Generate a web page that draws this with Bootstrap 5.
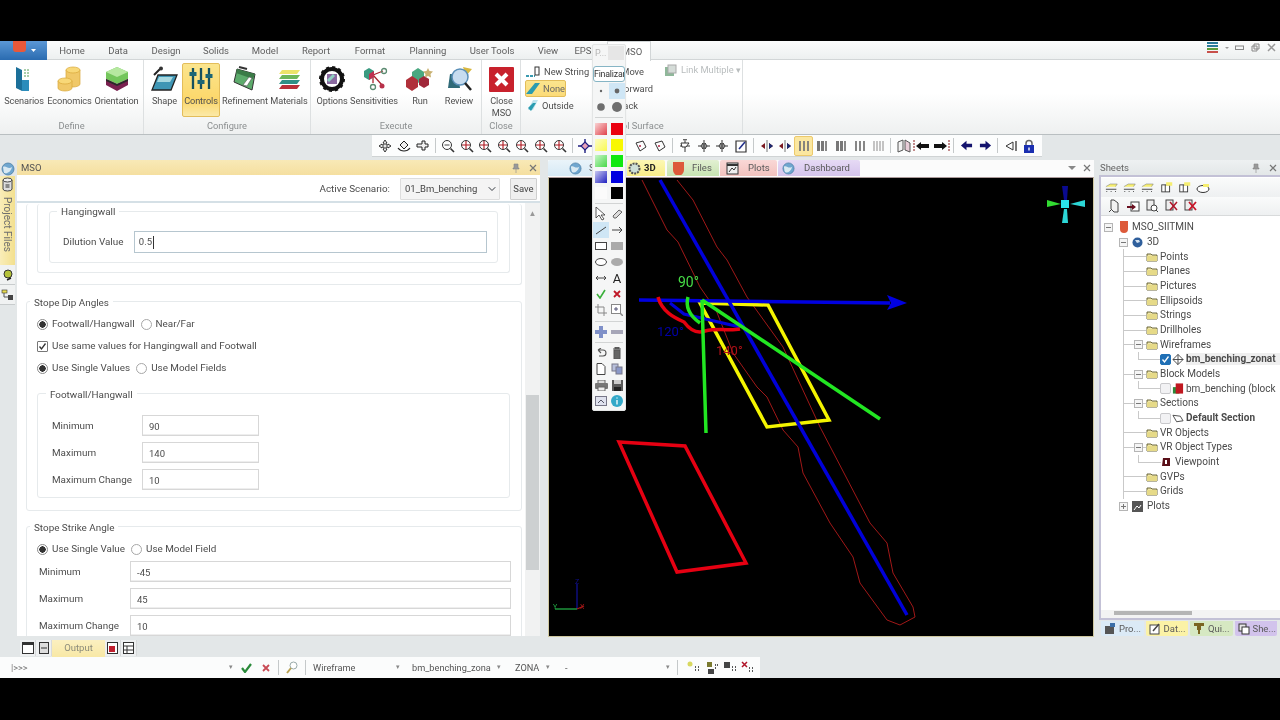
<!DOCTYPE html>
<html lang="en">
<head>
    <meta charset="UTF-8">
    <meta name="viewport" content="width=device-width, initial-scale=1.0">
    <title>MSO</title>
    <link href="https://cdn.jsdelivr.net/npm/bootstrap@5.3.0/dist/css/bootstrap.min.css" rel="stylesheet">
    <style>
        html, body { margin: 0; height: 720px; overflow: hidden; background: #000; }
        body { font-family: Roboto, "Liberation Sans", sans-serif; font-size: 10px; color: #4c4c4c; line-height: 1.2; }
        svg { display: block; flex: none; }
        .sprite { position: absolute; width: 0; height: 0; }
        #app { position: relative; margin-top: 41px; height: 637px; width: 1280px; background: #e3e7e8; overflow: hidden; filter: blur(.3px); }

        /* ribbon tabs */
        .rtabs { height: 19px; background: linear-gradient(#fbfcfc, #edf0f0); border-bottom: 1px solid #d2d6d7; }
        .appbtn { width: 47px; height: 19px; background: linear-gradient(#5b98d6, #2a6bb0); }
        .rtabs .nav-link { padding: 0; color: #5e5e5e; font-size: 9.5px; line-height: 19px; text-align: center; }
        .tw-a { width: 50px; } .tw-b { width: 42px; } .tw-c { width: 54px; } .tw-d { width: 46px; }
        .tw-e { width: 52px; } .tw-f { width: 50px; } .tw-g { width: 58px; } .tw-h { width: 58px; } .tw-i { width: 70px; } .tw-j { width: 42px; } .tw-k { width: 28px; }
        .rtabs .nav-link.active { width: 44px; height: 20px; background: #fff; border: 1px solid #d2d6d7; border-bottom: 0; margin-left: 10px; padding-left: 6px; }
        .winbtns { gap: 7px; padding-right: 4px; color: #888; }
        .tight { margin-right: -3px; }

        /* ribbon */
        .ribbon { height: 75px; background: linear-gradient(#fff 45%, #eef0f0); border-bottom: 1px solid #b9bfc1; }
        .rgroup { height: 74px; border-right: 1px solid #dde0e1; position: relative; flex: none; }
        .g-define { width: 144px; padding-left: 1px; }
        .g-config { width: 167px; padding-left: 3px; }
        .g-exec { width: 171px; padding-left: 2px; }
        .g-close { width: 39px; }
        .g-surf { width: 222px; }
        .glabel { position: absolute; left: 0; right: 0; bottom: 3px; text-align: center; color: #8b8f90; font-size: 9.3px; }
        .rbtn { margin-top: 3px; height: 54px; display: flex; flex-direction: column; align-items: center; padding-top: 3px; text-align: center; font-size: 9.2px; letter-spacing: -.1px; color: #505050; flex: none; line-height: 12px; white-space: nowrap; }
        .rbtn svg { margin-bottom: 3px; }
        .rbtn.on { background: linear-gradient(#fbe58e, #fcd76a 70%, #fbe9a8); border: 1px solid #e3bd5a; border-radius: 2px; padding-top: 2px; }
        .w35 { width: 35px; } .w38 { width: 38px; } .w39 { width: 39px; } .w46 { width: 46px; } .w45 { width: 45px; } .w49 { width: 49px; } .w50 { width: 50px; } .w32 { width: 32px; }
        .scol { padding: 3px 0 0 4px; width: 100px; }
        .sitem { height: 17px; display: flex; align-items: center; gap: 3px; font-size: 9.3px; padding-right: 4px; white-space: nowrap; }
        .sitem.on { background: linear-gradient(#fbe58e, #fcdb78); border: 1px solid #e3bd5a; border-radius: 2px; width: 41px; color: #666; }
        .col2 { width: 40px; padding-top: 3px; margin-left: -8px; }
        .col2 .sitem { padding: 0; justify-content: flex-end; width: 40px; }
        .col2 .sitem.pm { padding-right: 9px; }
        .col2 .sitem.pb { padding-right: 15px; }
        .linkm { margin-left: 11px; padding-top: 4px; color: #b9bdbe; font-size: 9.3px; }

        /* toolbar */
        .tbrow { height: 25px; padding: 0 0 3px 372px; display: flex; }
        .tbar { height: 22px; background: #fcfdfd; border-bottom: 1px solid #cfd3d4; padding-left: 4px; width: 670px; display: flex; align-items: center; }
        .slot { width: 18.6px; height: 20px; display: flex; align-items: center; justify-content: center; flex: none; }
        .slot.on { background: #fbe7a0; border: 1px solid #ecc96c; border-radius: 2px; }
        .vsep { width: 1px; height: 15px; background: #c5c9ca; margin: 0 3px; flex: none; }

        /* main */
        .mainrow { height: 480px; }
        .rail { width: 17px; flex: none; background: #e3e7e8; }
        .railglobe { height: 16px; padding: 2px 0 0 1px; }
        .railtab { width: 15px; height: 89px; background: linear-gradient(90deg, #f9edb9, #f3e08e); color: #6f6f6f; font-size: 10px; display: flex; flex-direction: column; align-items: center; padding-top: 1px; }
        .railtab span { writing-mode: vertical-rl; line-height: 13px; margin-top: 5px; }
        .railbtn { width: 15px; height: 20px; background: #f0f2f2; border-bottom: 1px solid #c8cccd; display: flex; justify-content: center; align-items: center; }
        .msopane { width: 523px; height: 476px; flex: none; background: #fff; margin-right: 8px; display: flex; flex-direction: column; }
        .phead { height: 15px; flex: none; display: flex; align-items: center; padding: 0 3px 0 4px; justify-content: space-between; font-size: 9.5px; }
        .phead.yl { background: linear-gradient(#f8e9b6, #f5dfa0); color: #555; }
        .pbtns { gap: 9px; color: #7a7a7a; font-size: 10px; }
        .scenbar { height: 28px; flex: none; gap: 10px; padding: 2px 3px 0 0; font-size: 9.9px; border-bottom: 2px solid #d5e0e6; }
        .scenbar .form-select { width: 100px; height: 22px; min-height: 0; font-size: 9.5px; padding: 0 4px; border-radius: 1px; border-color: #ddd; background-color: #f4f4f4; background-size: 8px; background-position: right 3px center; color: #444; }
        .scenbar .btn { width: 27px; height: 22px; padding: 0; font-size: 9.5px; background: #efefef; border-color: #cfcfcf; border-radius: 1px; color: #444; }
        .pscroll { flex: 1; min-height: 0; overflow: hidden; }
        .formarea { width: 508px; overflow: hidden; padding-top: 1px; }
        .vbar { width: 15px; flex: none; background: #f1f2f2; text-align: center; color: #999; font-size: 8px; padding-top: 6px; }
        .vthumb { margin: 176px 1px 0; height: 175px; background: #cdd0d1; }
        .frm { border: 1px solid #e6eaec; border-radius: 3px; flex: none; }
        .ttl { display: table; margin-top: -7px; background: #fff; padding: 0 4px; height: 14px; line-height: 16px; font-size: 9.9px; color: #4c4c4c; }
        .fa { margin-left: 9px; width: 496px; height: 81px; padding: 0 11px 0 10px; border-top: 0; }
        .fb { height: 69px; padding: 7px 11px 0; border-top: 0; }
        .fc { height: 52px; padding: 0 10px 0 13px; }
        .fc .ttl { margin-left: -6px; line-height: 14px; }
        .fd { margin: 16px 0 0 9px; width: 496px; height: 210px; padding: 0 11px 0 10px; }
        .fd > .ttl, .ff > .ttl { margin-left: -7px; height: 14px; }
        .fe { margin: 14px 0 0 0; height: 105px; padding: 0 10px 0 14px; }
        .fe .ttl { margin-left: -6px; }
        .ff { margin: 15px 0 0 9px; width: 496px; height: 130px; padding: 0 10px; }
        .optrow { height: 22px; gap: 0; font-size: 9.9px; }
        .optrow.first { margin-top: 2px; }
        .form-check-input.rd { width: 11px; height: 11px; margin: 0 4px 0 0; border-color: #a7a7a7; flex: none; }
        .form-check-input.rd:checked { background-color: #fff; border-color: #8a8a8a; background-image: radial-gradient(circle, #333 0 3px, transparent 3.4px); }
        .form-check-input.cb { width: 11px; height: 11px; margin: 0 4px 0 0; border-radius: 1px; border-color: #8a8a8a; flex: none; }
        .form-check-input.cb:checked { background-color: #fff; border-color: #777; background-image: linear-gradient(#fff, #fff); }
        .cbwrap { position: relative; width: 15px; flex: none; display: flex; }
        .cbwrap svg { position: absolute; left: 1px; top: 1px; }
        .gapr { margin-right: 6px; }
        .fld { font-size: 9.9px; }
        .fld .form-control { height: 21px; min-height: 0; padding: 1px 6px 0; font-size: 9.5px; border-radius: 0; border-color: #d7d7d7; color: #4c4c4c; box-shadow: inset 0 -1px 0 #eee; background: #fff; }
        .fdil { margin-top: 12px; }
        .fdil label { width: 71px; }
        .fdil .dil { width: 354px; height: 22px; border: 1px solid #b6c6cf; display: flex; align-items: center; padding-left: 4px; font-size: 9.5px; }
        .caret { width: 1px; height: 13px; background: #333; margin-left: 1px; }
        .frow { margin-top: 6px; }
        .frow.top { margin-top: 12px; }
        .frow .lb2 { width: 90px; }
        .frow .form-control.s { width: 117px; }
        .frow .lb3 { width: 93px; padding-left: 2px; }
        .frow .form-control.l { width: 381px; }
        .ff .frow.x { margin-top: 1px; }

        /* view */
        .viewpane { width: 546px; height: 477px; flex: none; margin-right: 6px; display: flex; flex-direction: column; background: #fff; }
        .vtabs { height: 17px; flex: none; background: #fbfbfb; position: relative; }
        .vt { height: 16px; display: flex; align-items: center; gap: 7px; padding: 0 5px; font-size: 9.5px; color: #5a5a5a; border-radius: 2px 2px 0 0; flex: none; }
        .vt-s { width: 79px; background: linear-gradient(#eaf4fa, #d6e9f5); padding-left: 21px; }
        .vt-3d { width: 38px; background: linear-gradient(#fdf8b4, #f9ee88); color: #222; font-weight: 700; gap: 3px; padding-left: 1px; }
        .vt-f { width: 52px; background: linear-gradient(#e2f0d2, #c8e4b2); margin-left: 2px; gap: 7px; }
        .vt-p { width: 57px; background: linear-gradient(#f9d8d6, #f3c2be); margin-left: 1px; gap: 9px; padding-left: 6px; }
        .vt-d { width: 82px; background: linear-gradient(#e6daf5, #d5c4ec); margin-left: 1px; padding-left: 4px; gap: 9px; }
        .vclose { position: absolute; right: 3px; top: 0; height: 16px; gap: 7px; color: #777; }
        .canvasbox { flex: 1; background: #000; border: 1px solid #cfc8a0; border-top-color: #a99; min-height: 0; }
        .canvasbox svg text { font-family: Roboto, "Liberation Sans", sans-serif; }

        /* sheets */
        .sheetpane { width: 180px; flex: none; display: flex; flex-direction: column; height: 480px; }
        .phead.gy { background: linear-gradient(#eef1f2, #e3e7e8); color: #666; padding-left: 0; }
        .sbox { height: 445px; flex: none; background: #fff; border: 2px solid #c3c1d6; border-right: 0; margin-left: -1px; display: flex; flex-direction: column; padding-top: 1px; }
        .stb { height: 19px; flex: none; background: linear-gradient(#fafbfb, #eef0f1); padding-left: 1.500px; gap: .4px; }
        .stb.two { padding-left: 4px; gap: 1px; border-bottom: 1px solid #d8dadb; }
        .stb .slot { width: 18px; height: 17px; }
        .tree { flex: 1; padding-top: 4px; min-height: 0; overflow: hidden; font-size: 10px; color: #4a4a4a; white-space: nowrap; }
        .tr { height: 14.68px; display: flex; align-items: center; }
        .ex { width: 9px; height: 9px; border: 1px solid #b5b5b5; background: #f5f5f5; position: relative; flex: none; }
        .ex::before { content: ""; position: absolute; left: 1px; right: 1px; top: 3px; height: 1px; background: #777; }
        .ex.pl::after { content: ""; position: absolute; top: 1px; bottom: 1px; left: 3px; width: 1px; background: #777; }
        .l0 { padding-left: 3px; }
        .l1 { padding-left: 18px; }
        .l2 { padding-left: 22px; }
        .l3 { padding-left: 37px; }
        .stub { width: 23px; height: 9px; background: linear-gradient(#c9c9c9, #c9c9c9) no-repeat 0 4px / 100% 1px; display: flex; flex: none; align-items: center; }
        .stub .ex { margin-left: 11px; }
        .hook { width: 22px; height: 8px; flex: none; border-left: 1px solid #c9c9c9; border-bottom: 1px solid #c9c9c9; margin-top: -7px; }
        .hook.sh { width: 23px; }
        .kids { background: linear-gradient(#c9c9c9, #c9c9c9) no-repeat 22px 0 / 1px calc(100% + 8px); }
        .folder { margin-right: 2px; }
        .tic { margin-right: 2px; }
        .sel-row { background: #efefef; padding-right: 4px; }
        .tchk { width: 11px; height: 11px; border: 1px solid #c9c9cc; background: #f2f2f4; border-radius: 2px; flex: none; margin-right: 1px; }
        .tchk.y { background: #1f6fb5; border-color: #1f6fb5; }
        .hbar { height: 8px; flex: none; background: #f3f3f3; padding: 1px 0 0 13px; }
        .hthumb { width: 78px; height: 4px; background: #b5b5b5; }
        .btabs { height: 16px; margin-top: 1px; gap: 2px; padding-left: 1px; flex: none; }
        .bt { width: 42.5px; height: 15px; display: flex; align-items: center; gap: 3px; padding-left: 3px; font-size: 9.5px; color: #5a5a5a; border-radius: 0 0 2px 2px; flex: none; }
        .bt-a { background: #dbeaf6; } .bt-b { background: #fbf2a6; } .bt-c { background: #d6e8c2; } .bt-d { background: #d2c3ec; }

        /* lower */
        .lowtabs { height: 17px; padding-left: 20px; }
        .lt { width: 16px; height: 16px; display: flex; align-items: center; justify-content: center; background: #eef0f1; flex: none; border-right: 1px solid #d8dadb; }
        .lt-o { width: 53px; background: linear-gradient(#fbf0c0, #f8e8a6); font-size: 9.5px; color: #8b8b7a; text-align: center; line-height: 16px; flex: none; }
        .statusbar { height: 21px; width: 760px; background: #fbfcfc; font-size: 9.2px; color: #555; }
        .sb1 { width: 35px; padding-left: 11px; flex: none; color: #777; }
        .sbinput { width: 202px; padding-right: 4px; text-align: right; color: #888; flex: none; font-size: 7px; }
        .sbb { flex: none; display: flex; align-items: center; justify-content: center; }
        .sb19 { width: 19px; } .sb20 { width: 20px; } .sb18 { width: 18px; }
        .sbdd { flex: none; display: flex; justify-content: space-between; padding-right: 4px; align-items: center; }
        .sbdd i { font-style: normal; font-size: 7px; color: #888; }
        .dd1 { width: 91px; margin-left: 4px; } .dd2 { width: 101px; padding-left: 8px; } .dd3 { width: 49px; padding-left: 10px; } .dd4 { width: 120px; padding-left: 11px; }

        /* floating annotation palette */
        .palette { position: absolute; left: 592px; top: 3px; width: 34px; height: 367px; background: #f5f6f6; border: 1px solid #e3e5e5; border-radius: 2px; box-shadow: 0 1px 1px rgba(0,0,0,.15); color: #555; }
        .ptop { height: 16px; display: flex; align-items: center; justify-content: space-between; padding: 0 1px 0 2px; color: #b5b5b5; font-size: 9px; }
        .ptop span.x { width: 16px; height: 14px; background: #e6e6e6; }
        .pfin { display: block; margin: 5px 0 1px; width: 32px; height: 16px; padding: 0; border: 1px solid #86b5c5; border-radius: 3px; background: #fff; color: #333; font-size: 8.8px; letter-spacing: -.2px; line-height: 14px; text-align: center; overflow: hidden; }
        .pgrid { display: grid; grid-template-columns: 16px 16px; grid-auto-rows: 16px; }
        .pgrid > div { display: flex; align-items: center; justify-content: center; }
        .pgrid > div.sel { background: #cfe6f5; }
        .psep { height: 1px; background: #d2d4d4; margin: 3px 2px 2px; }
        .psep.a { margin: 2px 2px 3px; }
        .psep.b { margin: 2px 2px 2px; }
        .swatch { width: 12px; height: 12px; }
        .s-rg { background: linear-gradient(135deg, #f9d4d4, #e0404a); } .s-r { background: #ea0010; }
        .s-yg { background: linear-gradient(135deg, #fdfdc4, #f9f952); } .s-y { background: #f8f800; }
        .s-gg { background: linear-gradient(135deg, #c8f5c8, #48d848); } .s-g { background: #10e810; }
        .s-bg { background: linear-gradient(135deg, #c8c8f0, #2020c0); } .s-b { background: #0000e0; }
        .s-w { background: #fbfbfb; } .s-k { background: #000; }
        .pa { color: #222; font-size: 13px; line-height: 1; }
    </style>
</head>
<body>

<svg class="sprite" xmlns="http://www.w3.org/2000/svg">
    <symbol id="i-folder" viewBox="0 0 12 10"><path d="M1 2h4l1 1h5v6H1z" fill="#efe6a8" stroke="#5f5a2e" stroke-width=".9"/><path d="M1 4h10v5H1z" fill="#e6da88"/></symbol>
    <symbol id="i-move" viewBox="0 0 14 14"><path d="M7 1 9 4H8v2h2V5l3 2-3 2V8H8v2h1l-2 3-2-3h1V8H4v1L1 7l3-2v1h2V4H5z" fill="#e8e8e8" stroke="#222" stroke-width=".9"/></symbol>
    <symbol id="i-rot" viewBox="0 0 14 14"><path d="M7 2 11 6 7 10 3 6z" fill="#eee" stroke="#222"/><path d="M1 9c3 4 9 4 12 0" fill="none" stroke="#222" stroke-width="1.2"/></symbol>
    <symbol id="i-pan" viewBox="0 0 14 14"><path d="M5 5h2V2h3v3h3v3h-3v3H7V8H2V5z" fill="#f2f2f2" stroke="#222"/></symbol>
    <symbol id="i-zm" viewBox="0 0 14 14"><circle cx="6" cy="6" r="4.5" fill="#fff" stroke="#333"/><path d="M9.5 9.5 13 13" stroke="#333" stroke-width="1.6"/><path d="M3.5 6h5" stroke="#444"/></symbol>
    <symbol id="i-zr" viewBox="0 0 14 14"><circle cx="6" cy="6" r="4.5" fill="#fff" stroke="#333"/><path d="M9.5 9.5 13 13" stroke="#333" stroke-width="1.6"/><path d="M6 2v8M2 6h8" stroke="#b01820" stroke-width="1.1"/></symbol>
    <symbol id="i-fit" viewBox="0 0 14 14"><path d="M7 3 11 7 7 11 3 7z" fill="#e8a2b8" stroke="#202080" stroke-width="1.2"/><path d="M7 0v3M7 11v3M0 7h3M11 7h3" stroke="#202080" stroke-width="1.4"/></symbol>
    <symbol id="i-cube" viewBox="0 0 14 14"><path d="M2 4 9 2 12 8 6 12z" fill="none" stroke="#333"/><circle cx="6" cy="7" r="1" fill="#b02040"/></symbol>
    <symbol id="i-cutz" viewBox="0 0 14 14"><path d="M7 1v12M2 7h10" stroke="#333"/><path d="M3 4h8L8 8H4z" fill="#fff" stroke="#333"/><path d="M5 1l2-1 2 1" stroke="#333" fill="none"/></symbol>
    <symbol id="i-sec" viewBox="0 0 14 14"><path d="M7 1v12" stroke="#333"/><path d="M1 7h3l2-3v6L4 7M13 7h-3L8 4v6l2-3" fill="none" stroke="#333"/></symbol>
    <symbol id="i-note" viewBox="0 0 14 14"><path d="M2 2h10v11H2z" fill="#fff" stroke="#333" stroke-width="1.2"/><path d="M5 10 11 3" stroke="#22308a" stroke-width="1.6"/></symbol>
    <symbol id="i-la" viewBox="0 0 14 14"><path d="M7 1v12" stroke="#777"/><path d="M5 4 1 7l4 3zM9 4l4 3-4 3z" fill="#7a1820"/><path d="M9 4l4 3-4 3z" fill="#1a2a70"/></symbol>
    <symbol id="i-bars" viewBox="0 0 14 14"><path d="M3 2v10M7 2v10M11 2v10" stroke="#7a7a7a" stroke-width="1.8"/></symbol>
    <symbol id="i-bar2" viewBox="0 0 14 14"><path d="M2 2h3v10H2zM6 2h3v10H6z" fill="#777"/><path d="M11 2v10" stroke="#888" stroke-width="2"/></symbol>
    <symbol id="i-bar3" viewBox="0 0 14 14"><path d="M2 2h2v10H2zM5 2h2v10H5zM8 2h2v10H8zM11 2h2v10h-2z" fill="#c4c4c4"/></symbol>
    <symbol id="i-fold" viewBox="0 0 14 14"><path d="M1 3 6 1v10l-5 2z" fill="#f2f2f2" stroke="#555"/><path d="M8 1l5 3v9l-5-2z" fill="#e8cdd8" stroke="#555"/></symbol>
    <symbol id="i-bl" viewBox="0 0 18 14"><path d="M1 1v12" stroke="#8a1b1b" stroke-dasharray="2 1"/><path d="M3 7l5-4v2h8v4H8v2z" fill="#111"/></symbol>
    <symbol id="i-br" viewBox="0 0 18 14"><path d="M17 1v12" stroke="#8a1b1b" stroke-dasharray="2 1"/><path d="M15 7l-5-4v2H2v4h8v2z" fill="#111"/></symbol>
    <symbol id="i-al" viewBox="0 0 14 14"><path d="M1 7l6-5v3h6v4H7v3z" fill="#14146e"/></symbol>
    <symbol id="i-ar" viewBox="0 0 14 14"><path d="M13 7 7 2v3H1v4h6v3z" fill="#14146e"/></symbol>
    <symbol id="i-tri" viewBox="0 0 14 14"><path d="M9 3v8L2 7z" fill="none" stroke="#333"/><path d="M12 2v10" stroke="#333" stroke-width="1.3"/></symbol>
    <symbol id="i-lock" viewBox="0 0 14 14"><path d="M4 7V4.5a3 3 0 0 1 6 0V7" fill="none" stroke="#666" stroke-width="1.5"/><rect x="2" y="6" width="10" height="8" fill="#1a2fb0"/><rect x="6.3" y="8.5" width="1.4" height="3" fill="#fff"/></symbol>
    <symbol id="i-yd" viewBox="0 0 16 14"><path d="M1 6 6 3h8l-2 3" fill="#f6ee70" stroke="#777" stroke-width=".6"/><path d="M1 9h12" stroke="#333"/><path d="M2 11v1M7 11v1M12 11v1" stroke="#333"/></symbol>
    <symbol id="i-yb" viewBox="0 0 16 14"><rect x="2" y="4" width="9" height="8" fill="#fff" stroke="#333"/><path d="M7 1h7v4H7z" fill="#f6ee70"/><path d="M6 4v8" stroke="#333"/></symbol>
    <symbol id="i-glb" viewBox="0 0 14 14"><circle cx="7" cy="7" r="6" fill="#6fa6cf"/><path d="M2 5c3-2 5 3 9 0-1 5-5 7-8 6z" fill="#d9e9f2"/><circle cx="7" cy="7" r="6" fill="none" stroke="#4d7fa6" stroke-width=".8"/></symbol>
    <symbol id="i-pg" viewBox="0 0 12 14"><path d="M3 1v9l3 3h4V4L6 1z" fill="#f2f2f2" stroke="#444"/><path d="M3 11 1 13" stroke="#444"/></symbol>
</svg>

<div id="app">

    <!-- ribbon tabs -->
    <div class="rtabs d-flex align-items-start">
        <div class="appbtn d-flex align-items-start justify-content-center gap-1">
            <svg width="15" height="11" viewBox="0 0 15 11"><path d="M1 0h13v8a3 3 0 0 1-3 3H4a3 3 0 0 1-3-3z" fill="#e8583a"/></svg>
            <svg class="mt-2" width="5" height="3" viewBox="0 0 5 3"><path d="M0 0h5L2.500 3z" fill="#fff"/></svg>
        </div>
        <ul class="nav flex-nowrap">
            <li><a class="nav-link tw-a" href="#">Home</a></li>
            <li><a class="nav-link tw-b" href="#">Data</a></li>
            <li><a class="nav-link tw-c" href="#">Design</a></li>
            <li><a class="nav-link tw-d" href="#">Solids</a></li>
            <li><a class="nav-link tw-e" href="#">Model</a></li>
            <li><a class="nav-link tw-f" href="#">Report</a></li>
            <li><a class="nav-link tw-g" href="#">Format</a></li>
            <li><a class="nav-link tw-h" href="#">Planning</a></li>
            <li><a class="nav-link tw-i" href="#">User Tools</a></li>
            <li><a class="nav-link tw-j" href="#">View</a></li>
            <li><a class="nav-link tw-k" href="#">EPS</a></li>
            <li><a class="nav-link active" href="#">MSO</a></li>
        </ul>
        <div class="ms-auto d-flex align-items-center winbtns">
            <svg class="tight" width="14" height="13" viewBox="0 0 14 13"><path d="M1 2h11M1 5h11" stroke="#2a7a9a" stroke-width="2"/><path d="M1 8h11" stroke="#5a9a3a" stroke-width="2"/><path d="M1 11h11" stroke="#c8504a" stroke-width="2"/></svg>
            <svg class="tight" width="7" height="13" viewBox="0 0 7 13"><path d="M1 6h4L3 8z" fill="#999"/></svg>
            <svg width="9" height="13" viewBox="0 0 9 13"><rect x=".5" y="5" width="8" height="3.500" fill="none" stroke="#888"/></svg>
            <svg width="9" height="13" viewBox="0 0 9 13"><path d="M3 3h5v5H3zM1 5h5v5H1z" fill="#f5f5f5" stroke="#888"/></svg>
            <svg width="9" height="13" viewBox="0 0 9 13"><path d="M1 3l7 7M8 3l-7 7" stroke="#999" stroke-width="1.5"/></svg>
        </div>
    </div>

    <!-- ribbon -->
    <div class="ribbon d-flex">
        <div class="rgroup g-define d-flex">
            <div class="rbtn w46">
                <svg width="26" height="26" viewBox="0 0 26 26"><path d="M5 1l6 3v21l-6-3z" fill="#1b6f99"/><path d="M11 14h7v11h-7z" fill="#2b8cbb"/><path d="M13 4h6M13 7h6M13 10h6" stroke="#8fbf8f" stroke-width="1.5" stroke-dasharray="2 1"/></svg>
                Scenarios
            </div>
            <div class="rbtn w45">
                <svg width="26" height="26" viewBox="0 0 26 26"><g fill="#f0c868" stroke="#d9a83a" stroke-width=".7"><path d="M9 4v14a7 3 0 0 0 14 0V4z"/><ellipse cx="16" cy="4" rx="7" ry="3" fill="#f8d878"/><path d="M1 15v7a7 3 0 0 0 14 0v-7z"/><ellipse cx="8" cy="15" rx="7" ry="3" fill="#f8d878"/></g></svg>
                Economics
            </div>
            <div class="rbtn w49">
                <svg width="26" height="26" viewBox="0 0 26 26"><path d="M2 6 13 1l11 5v7l-11 5-11-5z" fill="#74c65c"/><path d="M2 6l11 5 11-5-11-5z" fill="#b6e8a0"/><path d="M2 13l11 5 11-5v6l-11 6-11-6z" fill="#7a2050"/><path d="M2 13l11 5 11-5v2l-11 5-11-5z" fill="#2a2a2a"/></svg>
                Orientation
            </div>
            <div class="glabel">Define</div>
        </div>
        <div class="rgroup g-config d-flex">
            <div class="rbtn w35">
                <svg width="28" height="26" viewBox="0 0 28 26"><path d="M7 9h19l-6 15H1z" fill="#3f96b5" stroke="#222" stroke-width="1.300"/><path d="M8 11h14l-3 5H6z" fill="#a7d8e0"/><path d="M3 9 9 3" stroke="#222" stroke-width="2"/><circle cx="10" cy="2.500" r="2" fill="#333"/></svg>
                Shape
            </div>
            <div class="rbtn w38 on">
                <svg width="26" height="26" viewBox="0 0 26 26"><g stroke="#16505e" stroke-width="2.300"><path d="M5 2v21M13 2v21M21 2v21"/></g><g fill="#1c6676"><rect x="1.500" y="6" width="7" height="4"/><rect x="9.500" y="14" width="7" height="4"/><rect x="17.500" y="8" width="7" height="4"/></g></svg>
                Controls
            </div>
            <div class="rbtn w50">
                <svg width="28" height="26" viewBox="0 0 28 26"><path d="M6 3 24 8 21 24 3 16z" fill="#5dab6c" stroke="#333"/><path d="M6 3l18 5-2 5L5 7z" fill="#3b7b47"/><path d="M12 19l6-8 3 1-5 8z" fill="#fff" stroke="#555" stroke-width=".6"/><path d="M8 1l8 2" stroke="#333" stroke-width="2"/></svg>
                Refinement
            </div>
            <div class="rbtn w38">
                <svg width="24" height="26" viewBox="0 0 24 26"><path d="M5 4h18l-3 4H2z" fill="#ece36a"/><path d="M5 9h18l-3 4H2z" fill="#6eb65a"/><path d="M5 14h18l-3 4H2z" fill="#2f8f86"/><path d="M5 19h18l-3 4H2z" fill="#b8303a"/></svg>
                Materials
            </div>
            <div class="glabel">Configure</div>
        </div>
        <div class="rgroup g-exec d-flex">
            <div class="rbtn w38">
                <svg width="26" height="26" viewBox="0 0 26 26"><circle cx="13" cy="13" r="10" fill="none" stroke="#111" stroke-width="4"/><circle cx="13" cy="13" r="11.500" fill="none" stroke="#111" stroke-width="3" stroke-dasharray="3 3"/><rect x="8" y="8" width="10" height="10" fill="#8a6aa0"/><path d="M9 15l6-6" stroke="#8fd0c0" stroke-width="3"/></svg>
                Options
            </div>
            <div class="rbtn w46">
                <svg width="28" height="26" viewBox="0 0 28 26"><path d="M13 9 23 5M13 9v8M13 9l9 10" stroke="#a8252f" stroke-width="1.300"/><circle cx="24" cy="5" r="2.500" fill="none" stroke="#5a8a70" stroke-width="1.300"/><circle cx="13" cy="21" r="2.500" fill="none" stroke="#5a8a70" stroke-width="1.300"/><circle cx="22" cy="20" r="2.500" fill="#b8304a"/><path d="M9 2l5 3v6l-5 3-5-3V5z" fill="#3a9a80"/><path d="M9 8l5-3v6l-5 3z" fill="#c03050"/></svg>
                Sensitivities
            </div>
            <div class="rbtn w46">
                <svg width="28" height="26" viewBox="0 0 28 26"><path d="M12 2l6 4v7l-6 4-6-4V6z" fill="#4aa880"/><path d="M6 10l6 4v7l-6 4-6-4v-7z" fill="#b0303a"/><path d="M18 10l5 3v6l-5 3-5-3v-6z" fill="#a0283a"/><path d="M22 2l1.500 3L27 5.500 24.500 8l.5 3.500L22 10l-3 1.500.5-3.500L17 5.500 20.500 5z" fill="#c8b070"/></svg>
                Run
            </div>
            <div class="rbtn w32">
                <svg width="28" height="26" viewBox="0 0 28 26"><path d="M18 1l9 2-6 7z" fill="#d8b840"/><path d="M5 8h8l2 14H3z" fill="#2f6a78"/><circle cx="15" cy="11" r="8" fill="#c7dcef" stroke="#5a8fb8" stroke-width="1.500"/><path d="M20 17l6 7" stroke="#222" stroke-width="2.500"/></svg>
                Review
            </div>
            <div class="glabel">Execute</div>
        </div>
        <div class="rgroup g-close">
            <div class="rbtn w39 pt-1">
                <svg width="25" height="25" viewBox="0 0 25 25"><rect width="25" height="25" rx="1" fill="#c8212c"/><path d="M7 7l11 11M18 7 7 18" stroke="#fff" stroke-width="4"/></svg>
                <span>Close<br>MSO</span>
            </div>
            <div class="glabel">Close</div>
        </div>
        <div class="rgroup g-surf d-flex">
            <div class="scol">
                <div class="sitem">
                    <svg width="16" height="12" viewBox="0 0 16 12"><path d="M1 10h9" stroke="#3a9ab0" stroke-width="2" stroke-dasharray="3 1"/><rect x="10" y="1" width="4" height="8" fill="#fff" stroke="#333"/></svg>
                    New String
                </div>
                <div class="sitem on">
                    <svg width="14" height="13" viewBox="0 0 14 13"><path d="M0 12 9 1h5L6 12z" fill="#2a9cb0"/></svg>
                    None
                </div>
                <div class="sitem">
                    <svg width="14" height="13" viewBox="0 0 14 13"><path d="M3 11 8 1h5L8 11z" fill="#bfe4ee"/><path d="M3 9 8 4h3L6 12z" fill="#2a9cb0"/></svg>
                    Outside
                </div>
            </div>
            <div class="col2">
                <div class="sitem pm">Move</div>
                <div class="sitem">Forward</div>
                <div class="sitem pb">Back</div>
            </div>
            <div class="linkm d-flex align-items-start gap-1">
                <svg width="13" height="13" viewBox="0 0 13 13"><rect x="1" y="3" width="9" height="9" fill="#8fb89a"/><rect x="4" y="1" width="8" height="8" fill="#d5dcd8" stroke="#aaa"/></svg>
                <span>Link Multiple &#9662;</span>
            </div>
            <div class="glabel">Control Surface</div>
        </div>
    </div>

    <!-- view toolbar -->
    <div class="tbrow">
        <div class="tbar">
            <div class="slot"><svg width="14" height="14"><use href="#i-move"/></svg></div>
            <div class="slot"><svg width="14" height="14"><use href="#i-rot"/></svg></div>
            <div class="slot"><svg width="14" height="14"><use href="#i-pan"/></svg></div>
            <div class="vsep"></div>
            <div class="slot"><svg width="14" height="14"><use href="#i-zm"/></svg></div>
            <div class="slot"><svg width="14" height="14"><use href="#i-zr"/></svg></div>
            <div class="slot"><svg width="14" height="14"><use href="#i-zr"/></svg></div>
            <div class="slot"><svg width="14" height="14"><use href="#i-zr"/></svg></div>
            <div class="slot"><svg width="14" height="14"><use href="#i-zr"/></svg></div>
            <div class="slot"><svg width="14" height="14"><use href="#i-zr"/></svg></div>
            <div class="slot"><svg width="14" height="14"><use href="#i-zr"/></svg></div>
            <div class="vsep"></div>
            <div class="slot"><svg width="14" height="14"><use href="#i-fit"/></svg></div>
            <div class="slot"></div>
            <div class="slot"></div>
            <div class="slot"><svg width="14" height="14"><use href="#i-cube"/></svg></div>
            <div class="slot"><svg width="14" height="14"><use href="#i-cube"/></svg></div>
            <div class="vsep"></div>
            <div class="slot"><svg width="14" height="14"><use href="#i-cutz"/></svg></div>
            <div class="slot"><svg width="14" height="14"><use href="#i-sec"/></svg></div>
            <div class="slot"><svg width="14" height="14"><use href="#i-sec"/></svg></div>
            <div class="slot"><svg width="14" height="14"><use href="#i-note"/></svg></div>
            <div class="vsep"></div>
            <div class="slot"><svg width="14" height="14"><use href="#i-la"/></svg></div>
            <div class="slot"><svg width="14" height="14"><use href="#i-la"/></svg></div>
            <div class="slot on"><svg width="14" height="14"><use href="#i-bars"/></svg></div>
            <div class="slot"><svg width="14" height="14"><use href="#i-bar2"/></svg></div>
            <div class="slot"><svg width="14" height="14"><use href="#i-bar2"/></svg></div>
            <div class="slot"><svg width="14" height="14"><use href="#i-bars"/></svg></div>
            <div class="slot"><svg width="14" height="14"><use href="#i-bar3"/></svg></div>
            <div class="vsep"></div>
            <div class="slot"><svg width="14" height="14"><use href="#i-fold"/></svg></div>
            <div class="slot"><svg width="18" height="14"><use href="#i-bl"/></svg></div>
            <div class="slot"><svg width="18" height="14"><use href="#i-br"/></svg></div>
            <div class="vsep"></div>
            <div class="slot"><svg width="13" height="13"><use href="#i-al"/></svg></div>
            <div class="slot"><svg width="13" height="13"><use href="#i-ar"/></svg></div>
            <div class="vsep"></div>
            <div class="slot"><svg width="14" height="14"><use href="#i-tri"/></svg></div>
            <div class="slot"><svg width="14" height="14"><use href="#i-lock"/></svg></div>
        </div>
    </div>

    <div class="mainrow d-flex">
        <!-- left rail -->
        <div class="rail">
            <div class="railglobe"><svg width="14" height="14"><use href="#i-glb"/></svg></div>
            <div class="railtab">
                <svg width="11" height="15" viewBox="0 0 11 15"><path d="M1 3v9a4.500 2 0 0 0 9 0V3z" fill="#ddd" stroke="#444"/><ellipse cx="5.500" cy="3" rx="4.500" ry="2" fill="#eee" stroke="#444"/><rect x="3.500" y="7" width="4" height="4" fill="#888"/></svg>
                <span>Project Files</span>
            </div>
            <div class="railbtn"><svg width="12" height="14" viewBox="0 0 12 14"><circle cx="6" cy="6" r="4" fill="#b5c23a" stroke="#333"/><path d="M5 12l4-2" stroke="#222" stroke-width="1.500"/></svg></div>
            <div class="railbtn"><svg width="13" height="12" viewBox="0 0 13 12"><rect x="1" y="1" width="5" height="3" fill="#e8dc50" stroke="#333" stroke-width=".6"/><rect x="7" y="6" width="5" height="5" fill="#444"/><path d="M3 4v4h4" fill="none" stroke="#555"/></svg></div>
        </div>

        <!-- MSO pane -->
        <div class="msopane">
            <div class="phead yl"><span>MSO</span>
                <span class="d-flex pbtns align-items-center">
                    <svg width="8" height="10" viewBox="0 0 8 10"><path d="M2 1h4v4h1v1H1V5h1zM4 6v4" fill="#999" stroke="#888" stroke-width=".6"/></svg>
                    <svg width="8" height="8" viewBox="0 0 8 8"><path d="M1 1l6 6M7 1 1 7" stroke="#777" stroke-width="1.200"/></svg>
                </span>
            </div>
            <div class="scenbar d-flex align-items-center justify-content-end">
                <span>Active Scenario:</span>
                <select class="form-select"><option>01_Bm_benching</option></select>
                <button type="button" class="btn">Save</button>
            </div>
            <div class="pscroll d-flex">
                <div class="formarea">
                    <div class="frm fa">
                        <div class="frm fb">
                            <div class="frm fc">
                                <div class="ttl">Hangingwall</div>
                                <div class="d-flex align-items-center fld fdil">
                                    <label>Dilution Value</label>
                                    <div class="dil">0.5<span class="caret"></span></div>
                                </div>
                            </div>
                        </div>
                    </div>

                    <div class="frm fd">
                        <div class="ttl">Stope Dip Angles</div>
                        <div class="d-flex align-items-center optrow first">
                            <input class="form-check-input rd" type="radio" name="r1" checked><span class="gapr">Footwall/Hangwall</span>
                            <input class="form-check-input rd" type="radio" name="r1"><span>Near/Far</span>
                        </div>
                        <div class="d-flex align-items-center optrow">
                            <span class="cbwrap"><input class="form-check-input cb" type="checkbox" checked>
                                <svg width="9" height="9" viewBox="0 0 9 9"><path d="M1.500 4.500 3.500 7 7.500 1.500" fill="none" stroke="#333" stroke-width="1.300"/></svg></span>
                            <span>Use same values for Hangingwall and Footwall</span>
                        </div>
                        <div class="d-flex align-items-center optrow">
                            <input class="form-check-input rd" type="radio" name="r2" checked><span class="gapr">Use Single Values</span>
                            <input class="form-check-input rd" type="radio" name="r2"><span>Use Model Fields</span>
                        </div>
                        <div class="frm fe">
                            <div class="ttl">Footwall/Hangwall</div>
                            <div class="d-flex align-items-center fld frow top"><label class="lb2">Minimum</label><input class="form-control s" value="90"></div>
                            <div class="d-flex align-items-center fld frow"><label class="lb2">Maximum</label><input class="form-control s" value="140"></div>
                            <div class="d-flex align-items-center fld frow"><label class="lb2">Maximum Change</label><input class="form-control s" value="10"></div>
                        </div>
                    </div>

                    <div class="frm ff">
                        <div class="ttl">Stope Strike Angle</div>
                        <div class="d-flex align-items-center optrow first">
                            <input class="form-check-input rd" type="radio" name="r3" checked><span class="gapr">Use Single Value</span>
                            <input class="form-check-input rd" type="radio" name="r3"><span>Use Model Field</span>
                        </div>
                        <div class="d-flex align-items-center fld frow x"><label class="lb3">Minimum</label><input class="form-control l" value="-45"></div>
                        <div class="d-flex align-items-center fld frow"><label class="lb3">Maximum</label><input class="form-control l" value="45"></div>
                        <div class="d-flex align-items-center fld frow"><label class="lb3">Maximum Change</label><input class="form-control l" value="10"></div>
                    </div>
                </div>
                <div class="vbar">&#9650;<div class="vthumb"></div></div>
            </div>
        </div>

        <!-- 3D view -->
        <div class="viewpane">
            <div class="vtabs d-flex">
                <div class="vt vt-s"><svg width="13" height="13"><use href="#i-glb"/></svg>S</div>
                <div class="vt vt-3d"><svg width="13" height="13" viewBox="0 0 13 13"><circle cx="6.500" cy="6.500" r="5" fill="#cfe0d8" stroke="#555" stroke-width="2" stroke-dasharray="2 1"/></svg>3D</div>
                <div class="vt vt-f"><svg width="13" height="13" viewBox="0 0 13 13"><path d="M1 0h11v8a4 4 0 0 1-11 0z" fill="#dd5a3a"/></svg>Files</div>
                <div class="vt vt-p"><svg width="13" height="13" viewBox="0 0 13 13"><rect x="1" y="1" width="11" height="11" fill="#eee" stroke="#333"/><path d="M1 3h11" stroke="#333" stroke-width="2"/><path d="M3 10l3-4 2 2 2-3" fill="none" stroke="#333"/></svg>Plots</div>
                <div class="vt vt-d"><svg width="13" height="13"><use href="#i-glb"/></svg>Dashboard</div>
                <div class="vclose d-flex align-items-center">
                    <svg width="8" height="6" viewBox="0 0 8 6"><path d="M0 1h8L4 5z" fill="#888"/></svg>
                    <svg width="8" height="8" viewBox="0 0 8 8"><path d="M1 1l6 6M7 1 1 7" stroke="#777" stroke-width="1.200"/></svg>
                </div>
            </div>
            <div class="canvasbox">
                <svg width="544" height="458" viewBox="549 178 544 458">
                    <path d="M642 180 667 230 678 242 700 287 716 310 733 353 757 387 767 397 783 430 798 447 803 473 830 523 853 557 860 583 887 620 900 625 915 617 913 607 893 573 887 543 870 523 820 427 783 347 747 297 727 260 717 247 693 200 677 180" fill="none" stroke="#a01818" stroke-width="1"/>
                    <path d="M700 303 768 305 829 420 767 427z" fill="none" stroke="#f4f400" stroke-width="3.500"/>
                    <path d="M660 180 907 615" stroke="#0000d8" stroke-width="3.500"/>
                    <path d="M639 300 890 303" stroke="#0000e0" stroke-width="3.500"/>
                    <path d="M887 295 907 303 887 310 891 303z" fill="#0000e0"/>
                    <path d="M670 303 684 314 740 327" fill="none" stroke="#0000d8" stroke-width="3"/>
                    <text x="657" y="336" font-size="13" fill="#0000a8">120°</text>
                    <text x="716" y="355" font-size="13" fill="#b01018">140°</text>
                    <text x="678" y="287" font-size="14" fill="#46dc46">90°</text>
                    <path d="M658 297C662 312 675 318 684 322 690 330 697 334 705 331 718 328 730 331 740 329" fill="none" stroke="#e4000f" stroke-width="3.500"/>
                    <path d="M688 297C685 308 690 316 700 323" fill="none" stroke="#22e222" stroke-width="3.500"/>
                    <path d="M702 300 706 433M702 300 880 419" fill="none" stroke="#22e622" stroke-width="3.500"/>
                    <path d="M619 442 685 446 746 563 677 572z" fill="none" stroke="#e60012" stroke-width="3.500"/>
                    <path d="M577 609V584" stroke="#101090" stroke-width="1.300"/>
                    <path d="M577 609H555" stroke="#22aa44" stroke-width="1.300"/>
                    <path d="M577 609 584 606" stroke="#aa1818" stroke-width="1.300"/>
                    <text x="553" y="609" font-size="7" fill="#22aa44">Y</text>
                    <text x="580" y="609" font-size="7" fill="#aa1818">X</text>
                    <text x="575" y="584" font-size="7" fill="#101090">Z</text>
                    <path d="M1062 186h6l-1 14h-3z" fill="#0a0a90"/>
                    <path d="M1062 223h6l-1-14h-3z" fill="#2cd6d6"/>
                    <path d="M1047 200v7l14-3z" fill="#32dc32"/>
                    <path d="M1085 200v7l-15-3z" fill="#2cd6d6"/>
                    <rect x="1061" y="200" width="8" height="8" fill="#2ae4ea"/>
                </svg>
            </div>
        </div>

        <!-- sheets -->
        <div class="sheetpane">
            <div class="phead gy"><span>Sheets</span>
                <span class="d-flex pbtns align-items-center">
                    <svg width="8" height="10" viewBox="0 0 8 10"><path d="M2 1h4v4h1v1H1V5h1zM4 6v4" fill="#999" stroke="#888" stroke-width=".6"/></svg>
                    <svg width="8" height="8" viewBox="0 0 8 8"><path d="M1 1l6 6M7 1 1 7" stroke="#777" stroke-width="1.200"/></svg>
                </span>
            </div>
            <div class="sbox">
                <div class="stb d-flex align-items-center">
                    <div class="slot"><svg width="14" height="13"><use href="#i-yd"/></svg></div>
                    <div class="slot"><svg width="14" height="13"><use href="#i-yd"/></svg></div>
                    <div class="slot"><svg width="14" height="13"><use href="#i-yd"/></svg></div>
                    <div class="slot"><svg width="14" height="13"><use href="#i-yb"/></svg></div>
                    <div class="slot"><svg width="14" height="13"><use href="#i-yb"/></svg></div>
                    <div class="slot"><svg width="14" height="12" viewBox="0 0 14 12"><ellipse cx="7" cy="7" rx="6" ry="3.500" fill="#fff" stroke="#333"/><path d="M7 2h6v3H7z" fill="#f6ee70"/></svg></div>
                </div>
                <div class="stb two d-flex align-items-center">
                    <div class="slot"><svg width="12" height="14"><use href="#i-pg"/></svg></div>
                    <div class="slot"><svg width="13" height="13" viewBox="0 0 13 13"><rect x="4" y="2" width="8" height="9" fill="#fff" stroke="#444"/><path d="M0 6h5V4l4 3-4 3V8H0z" fill="#6a1020"/></svg></div>
                    <div class="slot"><svg width="13" height="14" viewBox="0 0 13 14"><rect x="1" y="1" width="7" height="10" fill="#eee" stroke="#444"/><circle cx="8" cy="9" r="3" fill="#fff" stroke="#444"/><path d="M10 11l2 2" stroke="#444"/></svg></div>
                    <div class="slot"><svg width="13" height="14" viewBox="0 0 13 14"><rect x="1" y="1" width="7" height="10" fill="#eee" stroke="#444"/><path d="M5 3l7 8M12 3l-7 8" stroke="#b01428" stroke-width="1.500"/></svg></div>
                    <div class="slot"><svg width="13" height="14" viewBox="0 0 13 14"><rect x="1" y="1" width="7" height="10" fill="#eee" stroke="#444"/><path d="M5 3l7 8M12 3l-7 8" stroke="#c81428" stroke-width="1.800"/></svg></div>
                </div>
                <div class="tree">
                    <div class="tr l0"><span class="ex"></span><svg class="ms-1 tic" width="13" height="13" viewBox="0 0 13 13"><path d="M3 0h8v8a4 4 0 0 1-8 0z" fill="#dd5a3a"/></svg><span>MSO_SIITMIN</span></div>
                    <div class="tr l1"><span class="ex"></span><svg class="ms-1 me-1" width="11" height="11" viewBox="0 0 11 11"><circle cx="5.500" cy="5.500" r="5" fill="#2f5f9c"/><path d="M3 3h4l1 2-3 1z" fill="#d4e2f0"/></svg><span>3D</span></div>
                    <div class="kids">
                        <div class="tr l2"><span class="stub"></span><svg class="folder" width="12" height="10"><use href="#i-folder"/></svg><span>Points</span></div>
                        <div class="tr l2"><span class="stub"></span><svg class="folder" width="12" height="10"><use href="#i-folder"/></svg><span>Planes</span></div>
                        <div class="tr l2"><span class="stub"></span><svg class="folder" width="12" height="10"><use href="#i-folder"/></svg><span>Pictures</span></div>
                        <div class="tr l2"><span class="stub"></span><svg class="folder" width="12" height="10"><use href="#i-folder"/></svg><span>Ellipsoids</span></div>
                        <div class="tr l2"><span class="stub"></span><svg class="folder" width="12" height="10"><use href="#i-folder"/></svg><span>Strings</span></div>
                        <div class="tr l2"><span class="stub"></span><svg class="folder" width="12" height="10"><use href="#i-folder"/></svg><span>Drillholes</span></div>
                        <div class="tr l2"><span class="stub"><span class="ex"></span></span><svg class="folder" width="12" height="10"><use href="#i-folder"/></svg><span>Wireframes</span></div>
                        <div class="tr l3"><span class="hook"></span><span class="tchk y"><svg width="9" height="9" viewBox="0 0 9 9"><path d="M1.500 4.500 3.500 7 7.500 1.500" fill="none" stroke="#fff" stroke-width="1.300"/></svg></span><svg class="tic" width="12" height="13" viewBox="0 0 13 13"><path d="M6.500 1 12 6.500 6.500 12 1 6.500zM1 6.500h11M6.500 1v11" fill="none" stroke="#444"/></svg><b class="sel-row">bm_benching_zonat</b></div>
                        <div class="tr l2"><span class="stub"><span class="ex"></span></span><svg class="folder" width="12" height="10"><use href="#i-folder"/></svg><span>Block Models</span></div>
                        <div class="tr l3"><span class="hook"></span><span class="tchk"></span><svg class="tic" width="12" height="13" viewBox="0 0 13 13"><rect x="1" y="5" width="7" height="7" fill="#2a8a3a"/><rect x="4" y="1" width="8" height="11" fill="#c01820"/></svg><span>bm_benching (block</span></div>
                        <div class="tr l2"><span class="stub"><span class="ex"></span></span><svg class="folder" width="12" height="10"><use href="#i-folder"/></svg><span>Sections</span></div>
                        <div class="tr l3"><span class="hook"></span><span class="tchk"></span><svg class="tic" width="12" height="13" viewBox="0 0 13 13"><path d="M1 3l8 1 3 5-7 1z" fill="#fff" stroke="#444"/></svg><b>Default Section</b></div>
                        <div class="tr l2"><span class="stub"></span><svg class="folder" width="12" height="10"><use href="#i-folder"/></svg><span>VR Objects</span></div>
                        <div class="tr l2"><span class="stub"><span class="ex"></span></span><svg class="folder" width="12" height="10"><use href="#i-folder"/></svg><span>VR Object Types</span></div>
                        <div class="tr l3"><span class="hook sh"></span><svg class="me-1" width="10" height="10" viewBox="0 0 10 10"><path d="M2 1h7v8H1z" fill="#5a0f18"/><path d="M4 3h2v4H4z" fill="#fff"/></svg><span>Viewpoint</span></div>
                        <div class="tr l2"><span class="stub"></span><svg class="folder" width="12" height="10"><use href="#i-folder"/></svg><span>GVPs</span></div>
                        <div class="tr l2"><span class="stub"></span><svg class="folder" width="12" height="10"><use href="#i-folder"/></svg><span>Grids</span></div>
                    </div>
                    <div class="tr l1"><span class="ex pl"></span><svg class="ms-1 me-1" width="11" height="11" viewBox="0 0 11 11"><rect width="11" height="11" fill="#555"/><path d="M2 9l3-4 2 2 2-3" stroke="#fff" fill="none"/></svg><span>Plots</span></div>
                </div>
                <div class="hbar"><div class="hthumb"></div></div>
            </div>
            <div class="btabs d-flex">
                <div class="bt bt-a"><svg width="12" height="12" viewBox="0 0 12 12"><rect x="1" y="3" width="9" height="8" fill="#555"/><rect x="6" y="0" width="5" height="4" fill="#3b6fa8"/></svg>Pro...</div>
                <div class="bt bt-b"><svg width="12" height="12" viewBox="0 0 12 12"><rect x="1" y="2" width="9" height="9" fill="#fff" stroke="#444"/><path d="M4 8l6-7" stroke="#444" stroke-width="1.500"/></svg>Dat...</div>
                <div class="bt bt-c"><svg width="12" height="13" viewBox="0 0 12 13"><path d="M1 1h10v3H8v4H7v4H5V8H4V4H1z" fill="#7a6420"/></svg>Qui...</div>
                <div class="bt bt-d"><svg width="12" height="12" viewBox="0 0 12 12"><rect x="1" y="1" width="7" height="7" fill="#e8e8e8" stroke="#333"/><rect x="4" y="4" width="7" height="7" fill="#fff" stroke="#333"/></svg>She...</div>
            </div>
        </div>
    </div>

    <!-- output tabs -->
    <div class="lowtabs d-flex">
        <div class="lt"><svg width="12" height="12" viewBox="0 0 12 12"><rect x=".5" y=".5" width="11" height="11" fill="#fff" stroke="#333"/><path d="M0 2h12" stroke="#333" stroke-width="2"/></svg></div>
        <div class="lt"><svg width="10" height="12" viewBox="0 0 10 12"><rect x=".5" y=".5" width="9" height="11" fill="#ddd" stroke="#333"/><path d="M2 6h6" stroke="#333"/></svg></div>
        <div class="lt-o">Output</div>
        <div class="lt"><svg width="11" height="12" viewBox="0 0 11 12"><rect x=".5" y=".5" width="10" height="11" fill="#fff" stroke="#333"/><rect x="2" y="4" width="6" height="6" fill="#c02030"/></svg></div>
        <div class="lt"><svg width="11" height="12" viewBox="0 0 11 12"><rect x=".5" y=".5" width="10" height="11" fill="#fff" stroke="#333"/><path d="M1 4h9M1 8h9M4 4v8" stroke="#333"/></svg></div>
    </div>

    <!-- command bar -->
    <div class="statusbar d-flex align-items-center">
        <div class="sb1">|&gt;&gt;&gt;</div>
        <div class="sbinput">&#9662;</div>
        <div class="sbb sb19"><svg width="11" height="10" viewBox="0 0 11 10"><path d="M1 5l3 4 6-8" fill="none" stroke="#2a8a3a" stroke-width="2.200"/></svg></div>
        <div class="sbb sb19"><svg width="8" height="8" viewBox="0 0 8 8"><path d="M1 1l6 6M7 1 1 7" stroke="#c84a55" stroke-width="1.800"/></svg></div>
        <div class="vsep"></div>
        <div class="sbb sb20"><svg width="12" height="13" viewBox="0 0 12 13"><circle cx="7.500" cy="4.500" r="3.500" fill="#fff" stroke="#9aa"/><path d="M5 7 1 12" stroke="#b8a050" stroke-width="2"/></svg></div>
        <div class="vsep"></div>
        <div class="sbdd dd1"><span>Wireframe</span><i>&#9662;</i></div>
        <div class="sbdd dd2"><span>bm_benching_zona</span><i>&#9662;</i></div>
        <div class="sbdd dd3"><span>ZONA</span><i>&#9662;</i></div>
        <div class="sbdd dd4"><span>-</span><i>&#9662;</i></div>
        <div class="vsep"></div>
        <div class="sbb sb18 ms-1"><svg width="14" height="13" viewBox="0 0 14 13"><circle cx="3" cy="3" r="2.500" fill="#d8d860"/><path d="M8 6h1M11 6h1M8 9h1M11 9h1" stroke="#222" stroke-width="1.600"/></svg></div>
        <div class="sbb sb18"><svg width="14" height="14" viewBox="0 0 14 14"><rect x="2" y="1" width="5" height="5" fill="#7a7a30"/><rect x="3" y="8" width="6" height="5" fill="#444"/><path d="M10 4h1M12 4h1M10 7h1" stroke="#222" stroke-width="1.500"/></svg></div>
        <div class="sbb sb18"><svg width="14" height="13" viewBox="0 0 14 13"><rect x="1" y="1" width="6" height="6" fill="#444"/><path d="M9 6h1M12 6h1M9 9h1M12 9h1" stroke="#222" stroke-width="1.600"/></svg></div>
        <div class="sbb sb18"><svg width="14" height="13" viewBox="0 0 14 13"><path d="M1 1l5 5M6 1 1 6" stroke="#b01428" stroke-width="1.500"/><path d="M8 7h1M11 7h1M8 10h1M11 10h1" stroke="#222" stroke-width="1.600"/></svg></div>
    </div>

    <!-- floating annotation palette -->
    <div class="palette">
        <div class="ptop"><span>P...</span><span class="x"></span></div>
        <button type="button" class="pfin">Finalizar</button>
        <div class="pgrid">
            <div><svg width="8" height="8"><circle cx="4" cy="4" r="1.200" fill="#666"/></svg></div>
            <div class="sel"><svg width="8" height="8"><circle cx="4" cy="4" r="2.400" fill="#666"/></svg></div>
            <div><svg width="12" height="12"><circle cx="6" cy="6" r="3.800" fill="#6e6e6e"/></svg></div>
            <div><svg width="12" height="12"><circle cx="6" cy="6" r="5" fill="#6e6e6e"/></svg></div>
        </div>
        <div class="psep a"></div>
        <div class="pgrid">
            <div><span class="swatch s-rg"></span></div><div><span class="swatch s-r"></span></div>
            <div><span class="swatch s-yg"></span></div><div><span class="swatch s-y"></span></div>
            <div><span class="swatch s-gg"></span></div><div><span class="swatch s-g"></span></div>
            <div><span class="swatch s-bg"></span></div><div><span class="swatch s-b"></span></div>
            <div><span class="swatch s-w"></span></div><div><span class="swatch s-k"></span></div>
        </div>
        <div class="psep b"></div>
        <div class="pgrid">
            <div><svg width="14" height="14" viewBox="0 0 14 14"><path d="M2 0v11l3-3 3 5 2-1-3-4h4z" fill="#fff" stroke="#333" stroke-width=".8"/></svg></div>
            <div><svg width="12" height="12" viewBox="0 0 12 12"><path d="M2 8 8 2l3 2-6 6H3z" fill="#ddd" stroke="#666"/></svg></div>
            <div class="sel"><svg width="12" height="12" viewBox="0 0 12 12"><path d="M1 10 11 3" stroke="#444"/></svg></div>
            <div><svg width="12" height="12" viewBox="0 0 12 12"><path d="M1 6h10M8 3l3 3-3 3" fill="none" stroke="#444"/></svg></div>
            <div><svg width="12" height="8" viewBox="0 0 12 8"><rect x=".5" y=".5" width="11" height="7" fill="#fff" stroke="#444"/></svg></div>
            <div><svg width="12" height="8" viewBox="0 0 12 8"><rect width="12" height="8" fill="#aaa"/></svg></div>
            <div><svg width="12" height="8" viewBox="0 0 12 8"><ellipse cx="6" cy="4" rx="5.500" ry="3.500" fill="#fff" stroke="#444"/></svg></div>
            <div><svg width="12" height="8" viewBox="0 0 12 8"><ellipse cx="6" cy="4" rx="6" ry="4" fill="#aaa"/></svg></div>
            <div><svg width="12" height="8" viewBox="0 0 12 8"><path d="M1 4h10M3 2 1 4l2 2M9 2l2 2-2 2" fill="none" stroke="#444"/></svg></div>
            <div class="pa">A</div>
            <div><svg width="10" height="10" viewBox="0 0 10 10"><path d="M1 5l3 4 5-8" fill="none" stroke="#3ab03a" stroke-width="1.600"/></svg></div>
            <div><svg width="8" height="8" viewBox="0 0 8 8"><path d="M1 1l6 6M7 1 1 7" stroke="#c01828" stroke-width="1.800"/></svg></div>
            <div><svg width="12" height="12" viewBox="0 0 12 12"><path d="M3 0v9h9M0 3h9v9" fill="none" stroke="#888"/></svg></div>
            <div><svg width="12" height="12" viewBox="0 0 12 12"><rect x=".5" y=".5" width="9" height="9" fill="#fff" stroke="#888"/><path d="M3 5h4M5 3v4" stroke="#557"/><path d="M9 9l3 3" stroke="#888" stroke-width="1.500"/></svg></div>
        </div>
        <div class="psep"></div>
        <div class="pgrid">
            <div><svg width="12" height="12" viewBox="0 0 12 12"><path d="M4 0h4v4h4v4H8v4H4V8H0V4h4z" fill="#7f90c8"/></svg></div>
            <div><svg width="12" height="4" viewBox="0 0 12 4"><rect width="12" height="4" fill="#a6a6b8"/></svg></div>
        </div>
        <div class="psep b"></div>
        <div class="pgrid">
            <div><svg width="12" height="10" viewBox="0 0 12 10"><path d="M3 2h5a3 3 0 0 1 0 6H4M3 2l3-2M3 2l3 3" fill="none" stroke="#555" stroke-width="1.100"/></svg></div>
            <div><svg width="10" height="12" viewBox="0 0 10 12"><path d="M1 2h8M3 2V0h4v2M2 3h6v9H2z" fill="#666" stroke="#555"/></svg></div>
            <div><svg width="10" height="12" viewBox="0 0 10 12"><path d="M1 .5h5l3 3v8H1z" fill="#fff" stroke="#444"/></svg></div>
            <div><svg width="12" height="12" viewBox="0 0 12 12"><rect x="1" y="1" width="6" height="7" fill="#b8c0dc" stroke="#778"/><rect x="5" y="4" width="6" height="7" fill="#8a98c8" stroke="#778"/></svg></div>
            <div><svg width="13" height="11" viewBox="0 0 13 11"><rect x="3" y="0" width="7" height="4" fill="#ddd" stroke="#666"/><rect x="0" y="3" width="13" height="6" rx="1" fill="#777"/><rect x="3" y="7" width="7" height="4" fill="#eee" stroke="#666"/></svg></div>
            <div><svg width="11" height="11" viewBox="0 0 11 11"><rect width="11" height="11" fill="#5a5a5a"/><rect x="2" y="0" width="7" height="4" fill="#ccc"/><rect x="2" y="7" width="7" height="4" fill="#222"/></svg></div>
            <div><svg width="12" height="10" viewBox="0 0 12 10"><rect x=".5" y=".5" width="11" height="9" fill="#dfe2ee" stroke="#778"/><path d="M3 7l3-3 3 3" fill="none" stroke="#556"/></svg></div>
            <div><svg width="12" height="12" viewBox="0 0 12 12"><circle cx="6" cy="6" r="6" fill="#33a8c8"/><path d="M6 2.500v1M6 5v4.500" stroke="#fff" stroke-width="1.300"/></svg></div>
        </div>
    </div>
</div>

<script src="https://cdn.jsdelivr.net/npm/bootstrap@5.3.0/dist/js/bootstrap.bundle.min.js"></script>
</body>
</html>
